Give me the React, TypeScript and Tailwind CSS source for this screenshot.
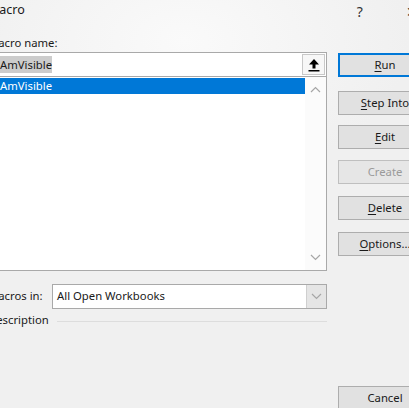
import React from "react";

const font = { fontFamily: '"Noto Sans", "Open Sans", sans-serif' };

function DlgButton({ label, mnemonic, active, disabled, className }: { label: string; mnemonic?: number; active?: boolean; disabled?: boolean; className?: string }) {
    const idx = mnemonic ?? -1;
    return (
        <div
            className={
                "h-[24px] w-[94px] flex items-center justify-center text-[11.3px] border " +
                (active
                    ? "border-[#0078d7] bg-[#e1e1e1] shadow-[inset_0_0_0_1px_#0078d7] "
                    : disabled
                    ? "border-[#bfbfbf] bg-[#e6e6e6] text-[#9a9a9a] "
                    : "border-[#adadad] bg-[#e1e1e1] text-[#1a1a1a] ") +
                (className ?? "")
            }
        >
            {idx < 0 ? (
                label
            ) : (
                <span>
                    {label.slice(0, idx)}
                    <span className="underline underline-offset-2">{label[idx]}</span>
                    {label.slice(idx + 1)}
                </span>
            )}
        </div>
    );
}

function Chevron({ up }: { up?: boolean }) {
    return (
        <svg width="11" height="7" viewBox="0 0 11 7" fill="none" stroke="#a6a6a6" strokeWidth="1.2">
            {up ? <path d="M1 6 L5.5 1.5 L10 6" /> : <path d="M1 1 L5.5 5.5 L10 1" />}
        </svg>
    );
}

export default function App() {
    return (
        <div
            className="w-[409px] h-[408px] overflow-hidden bg-[#f0f0f0] text-[#1a1a1a] bg-[radial-gradient(ellipse_55%_35%_at_45%_10%,#fafafa_0%,#f0f0f0_100%)]"
            style={font}
        >
            <div className="-ml-[12px] w-[460px]">
                {/* title bar */}
                <div className="h-[30px] flex items-start pt-[1px] text-[12.5px]">
                    <span>Macro</span>
                    <span className="ml-[332px] text-[14px] text-[#333]">?</span>
                    <span className="ml-[43px] text-[14px] text-[#333]">✕</span>
                </div>

                <div className="flex">
                    {/* left column */}
                    <div className="w-[339px] flex flex-col">
                        <div className="text-[11.3px] leading-[16px] h-[17px] mt-[5px]">
                            <span className="underline underline-offset-2">M</span>acro name:
                        </div>
                        <div className="h-[25px] border border-[#a9a9a9] bg-white flex items-center">
                            <span className="ml-[11px] text-[11.3px] bg-[#cccccc] leading-[17px]">AmVisible</span>
                            <div className="ml-auto mr-[1px] w-[23px] h-[21px] border border-[#c8c8c8] bg-[#f7f7f7] flex items-center justify-center">
                                <svg width="12" height="14" viewBox="0 0 12 14">
                                    <path d="M6 1 L11 6.5 L7.5 6.5 L7.5 10.5 L4.5 10.5 L4.5 6.5 L1 6.5 Z" fill="#000" />
                                    <rect x="0.5" y="12" width="11" height="1.5" fill="#000" />
                                </svg>
                            </div>
                        </div>
                        <div className="h-[194px] border border-t-0 border-[#a9a9a9] bg-white flex">
                            <div className="flex-1 pt-[1px]">
                                <div className="h-[16px] bg-[#0078d7] text-white text-[11.3px] leading-[16px] pl-[11px]">AmVisible</div>
                            </div>
                            <div className="w-[21px] bg-[#fbfbfb] flex flex-col items-center justify-between py-[9px]">
                                <Chevron up />
                                <Chevron />
                            </div>
                        </div>

                        <div className="mt-[13px] flex items-center">
                            <span className="text-[11.3px] w-[64px]">
                                <span className="underline underline-offset-2">M</span>acros in:
                            </span>
                            <div className="flex-1 h-[25px] border border-[#a9a9a9] bg-white flex items-center">
                                <span className="ml-[4px] text-[11.3px]">All Open Workbooks</span>
                                <div className="ml-auto w-[20px] h-full bg-[#e5e5e5] border-l border-[#cfcfcf] flex items-center justify-center">
                                    <Chevron />
                                </div>
                            </div>
                        </div>
                        <div className="mt-[3px] flex items-center text-[11.3px]">
                            <span>Description</span>
                            <div className="flex-1 ml-[8px] h-px bg-[#dddddd] mt-[2px]" />
                        </div>
                    </div>

                    {/* right column */}
                    <div className="ml-[11px] flex flex-col pt-[23px]">
                        <DlgButton label="Run" mnemonic={0} active />
                        <DlgButton label="Step Into" mnemonic={0} className="mt-[14px]" />
                        <DlgButton label="Edit" mnemonic={0} className="mt-[10px]" />
                        <DlgButton label="Create" disabled className="mt-[11px]" />
                        <DlgButton label="Delete" mnemonic={0} className="mt-[12px]" />
                        <DlgButton label="Options..." mnemonic={0} className="mt-[12px]" />
                        <DlgButton label="Cancel" className="mt-[130px]" />
                    </div>
                </div>
            </div>
        </div>
    );
}
